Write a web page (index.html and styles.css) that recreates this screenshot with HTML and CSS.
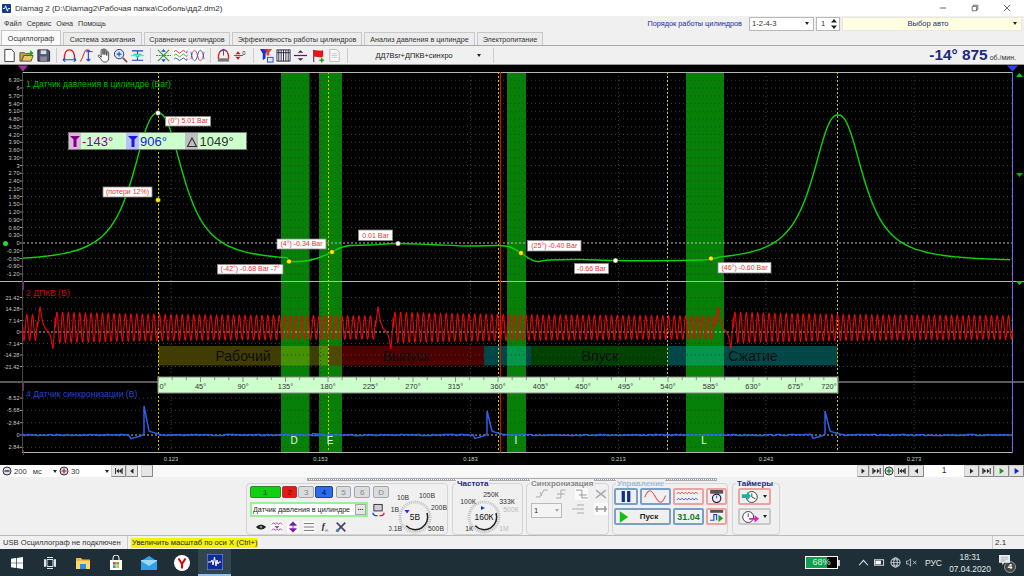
FILE: index.html
```html
<!DOCTYPE html>
<html lang="ru">
<head>
<meta charset="utf-8">
<title>Diamag 2</title>
<link rel="stylesheet" href="styles.css">
</head>
<body>
<svg class="defs" xmlns="http://www.w3.org/2000/svg">
  <symbol id="n-first" viewBox="0 0 11 8"><path d="M1 0h1.2v8H1zM9.8 0h1.2v8H9.8zM2.5 4 6 1v6zM6 4l3.5-3v6z" fill="#222"/></symbol>
  <symbol id="n-prev" viewBox="0 0 11 8"><path d="M3 4 7.5 .5v7z" fill="#222"/></symbol>
  <symbol id="n-next" viewBox="0 0 11 8"><path d="M8 4 3.5 .5v7z" fill="#222"/></symbol>
  <symbol id="n-last" viewBox="0 0 11 8"><path d="M0 0h1.2v8H0zM9.8 0h1.2v8H9.8zM5 4 1.5 1v6zM9.5 4 6 1v6z" fill="#222"/></symbol>
  <symbol id="arch" viewBox="0 0 16 16"><path d="M2.5 11.5C2.5 5 5 2 8 2s5.5 3 5.5 9.5" fill="none" stroke="#e02020" stroke-width="1.5"/></symbol>
</svg>

<header class="titlebar">
  <svg class="app-ico" viewBox="0 0 10 10"><rect width="10" height="10" rx="1" fill="#123a8c"/><path d="M1 5h2l1-3 2 6 1-3h2" fill="none" stroke="#fff" stroke-width="1"/></svg>
  <span class="app-title">Diamag 2 (D:\Diamag2\Рабочая папка\Соболь\дд2.dm2)</span>
  <div class="winctl">
    <svg viewBox="0 0 10 10"><path d="M1 5h8" stroke="#444" stroke-width="1"/></svg>
    <svg viewBox="0 0 10 10"><path d="M1.5 3h5.5v5.5H1.5zM3 3V1.5h5.5V7H7" fill="none" stroke="#444" stroke-width=".9"/></svg>
    <svg viewBox="0 0 10 10"><path d="M1 1l8 8M9 1l-8 8" stroke="#444" stroke-width="1"/></svg>
  </div>
</header>

<nav class="menubar">
  <span class="menu">Файл</span><span class="menu">Сервис</span><span class="menu">Окна</span><span class="menu">Помощь</span>
  <span class="order-label">Порядок работы цилиндров</span>
  <div class="combo combo-order"><span>1-2-4-3</span><i class="caret"></i></div>
  <div class="combo combo-spin"><span>1</span><svg viewBox="0 0 6 10"><path d="M3 0l3 3.5H0zM3 10l3-3.5H0z" fill="#222"/></svg></div>
  <div class="combo combo-auto"><span class="grow">Выбор авто</span><i class="caret"></i></div>
</nav>

<div class="tabbar">
  <span class="tab tab-on">Осциллограф</span>
  <span class="tab t2">Система зажигания</span>
  <span class="tab t3">Сравнение цилиндров</span>
  <span class="tab t4">Эффективность работы цилиндров</span>
  <span class="tab t5">Анализ давления в цилиндре</span>
  <span class="tab t6">Электропитание</span>
</div>

<div class="toolbar">
  <div class="tools">
    <svg viewBox="0 0 16 16"><path d="M3 1.5h7l3 3v10H3z" fill="#fff" stroke="#333"/></svg>
    <svg viewBox="0 0 16 16"><path d="M1 14V5h5l1 1h5v2H5l-2 6z" fill="#c8a040" stroke="#554"/><path d="M3 14l2-6h10l-2 6z" fill="#e8c860" stroke="#554"/><path d="M9 5h3V2l3.500 3.500L12 9V6.500H9z" fill="#20a020"/></svg>
    <svg viewBox="0 0 16 16"><path d="M2 2h11l1.500 1.500V14H2z" fill="#505870" stroke="#223"/><rect x="5" y="2.500" width="6" height="4" fill="#dde"/><rect x="4.500" y="9" width="7" height="5" fill="#889"/></svg>
    <i class="sep"></i>
    <svg viewBox="0 0 16 16"><use href="#arch"/><path d="M1 12.500h14M1 12.500l2.500-2M1 12.500l2.500 2M15 12.500l-2.500-2M15 12.500l-2.500 2" fill="none" stroke="#2050d0" stroke-width="1.200"/></svg>
    <svg viewBox="0 0 16 16"><path d="M1 14C4 14 5 2 8 2s2 2 7 2" fill="none" stroke="#e04040" stroke-width="1.200"/><path d="M10 2v12M10 2 8 4.500M10 2l2 2.500M10 14l-2-2.500M10 14l2-2.500" fill="none" stroke="#2050d0" stroke-width="1.200"/></svg>
    <svg viewBox="0 0 16 16"><path d="M5.500 8V2.500a1 1 0 0 1 2 0V7V1.800a1 1 0 0 1 2 0V7V2.800a1 1 0 0 1 2 0V8V5a1 1 0 0 1 2 0v6c0 3-2 4-4 4s-3-1-4-3L2.500 9c-.7-1.300 .8-2 1.500-1.200L5.500 10z" fill="#fff" stroke="#333" stroke-width=".9"/></svg>
    <svg viewBox="0 0 16 16"><circle cx="6.500" cy="6.500" r="5" fill="#d8e8ff" stroke="#335"/><path d="M4 6.500h5M6.500 4v5" stroke="#2050d0" stroke-width="1.200"/><path d="M10.500 10.500l4.500 4.500" stroke="#854" stroke-width="2"/></svg>
    <svg viewBox="0 0 16 16"><path d="M2 3h12M2 13h12M8 3v10" stroke="#2040c0" stroke-width="1.200"/><path d="M3 6h10L8 11z" fill="#20d0b0"/><path d="M1 8h14" stroke="#60e0d0" stroke-width="1.500"/></svg>
    <i class="sep"></i>
    <svg viewBox="0 0 16 16"><path d="M2 2l12 12M14 2 2 14" stroke="#30a030" stroke-width="1.200"/><path d="M8 1l2.500 3h-5zM8 15l2.500-3h-5z" fill="#2050d0"/><path d="M0 8h16" stroke="#c03030" stroke-dasharray="2 1"/></svg>
    <svg class="tool-on" viewBox="0 0 16 16"><path d="M1 4q2-3 4 0t4 0 4 0 2-1" fill="none" stroke="#e03030"/><path d="M1 8q2-3 4 0t4 0 4 0 2-1" fill="none" stroke="#30a030"/><path d="M1 12q2-3 4 0t4 0 4 0 2-1" fill="none" stroke="#2050d0"/></svg>
    <svg class="tool-on" viewBox="0 0 16 16"><path d="M1 12C3 0 6 0 8 8s5 8 7-4" fill="none" stroke="#e03030"/><path d="M1 4C3 16 6 16 8 8s5-8 7 4" fill="none" stroke="#2050d0"/></svg>
    <i class="sep"></i>
    <svg viewBox="0 0 16 16"><use href="#arch"/><path d="M8 1v7M8 1 6 3.500M8 1l2 2.500" fill="none" stroke="#2050d0"/><rect x="2" y="11" width="12" height="3.500" fill="#777"/></svg>
    <svg viewBox="0 0 18 16"><path d="M1 8h11" stroke="#444"/><path d="M3 6.500h6L6 3zM3 9.500h6L6 13z" fill="#c02020"/><text class="zero" x="11" y="7">0</text></svg>
    <i class="sep"></i>
    <svg viewBox="0 0 16 16"><path d="M1 1h9L7 6v5l-3 2V6z" fill="#2030d0"/><path d="M5 1h9l-3 4v3H8V5z" fill="#d03030" opacity=".85"/><rect x="9" y="10" width="6" height="5" fill="#e0e8ff" stroke="#2050d0"/></svg>
    <svg class="tool-on" viewBox="0 0 16 16"><rect x="1" y="2" width="14" height="12" fill="#fff" stroke="#224"/><path d="M1 5h14M5.500 2v12M10.500 2v12M3 2v12M8 2v12M13 2v12" stroke="#224" fill="none"/></svg>
    <svg viewBox="0 0 16 16"><path d="M1 8h14" stroke="#800080" stroke-width="1.300"/><path d="M5 5h6L8 2.500zM5 11h6l-3 2.500z" fill="#333"/></svg>
    <svg viewBox="0 0 16 16"><path d="M4 15V2" stroke="#222"/><path d="M4 2l8 1 2-1v7l-2 1-8-1z" fill="#e01818"/><path d="M10 13h5M12.500 10.500v5" stroke="#20a020" stroke-width="1.500"/></svg>
    <svg viewBox="0 0 16 16"><path d="M3 1.500h7l3 3v10H3z" fill="#f8f8f8" stroke="#bbb"/><path d="M5 6h6M5 8h6M5 10h6" stroke="#ccc"/></svg>
    <i class="sep"></i>
    <div class="preset"><span class="preset-name">ДД7Вsr+ДПКВ+синхро</span><i class="caret"></i></div>
    <i class="sep"></i>
  </div>
  <div class="rpm"><b>-14° 875</b><small>об./мин.</small></div>
</div>

<main class="scope"><svg id="scope" viewBox="0 65 1024 400" xmlns="http://www.w3.org/2000/svg"></svg></main>

<div class="navrow">
  <svg class="zoombtn" viewBox="0 0 10 10"><circle cx="5" cy="5" r="4" fill="#dde" stroke="#333"/><path d="M2.500 5h5" stroke="#222" stroke-width="1.200"/></svg>
  <div class="field f-ms"><span>200</span><span class="unit">мс</span><i class="caret"></i></div>
  <svg class="zoombtn" viewBox="0 0 10 10"><circle cx="5" cy="5" r="4" fill="#dde" stroke="#333"/><path d="M2.500 5h5M5 2.500v5" stroke="#c02020" stroke-width="1.200"/></svg>
  <div class="field f-n"><span>30</span><i class="caret"></i></div>
  <button class="nb"><svg><use href="#n-first"/></svg></button>
  <button class="nb nb-s"><svg><use href="#n-prev"/></svg></button>
  <button class="nb nb-gap"></button>
  <div class="track"></div>
  <button class="nb nb-s"><svg><use href="#n-next"/></svg></button>
  <button class="nb"><svg><use href="#n-last"/></svg></button>
  <svg class="zoombtn" viewBox="0 0 10 10"><circle cx="5" cy="5" r="4" fill="#dde" stroke="#333"/><path d="M2.500 5h5M5 2.500v5" stroke="#10a010" stroke-width="1.400"/></svg>
  <button class="nb"><svg><use href="#n-first"/></svg></button>
  <button class="nb"><svg><use href="#n-prev"/></svg></button>
  <div class="page">1</div>
  <button class="nb"><svg><use href="#n-next"/></svg></button>
  <button class="nb"><svg><use href="#n-last"/></svg></button>
  <button class="nb"><svg viewBox="0 0 11 8"><path d="M3 0l6 4-6 4z" fill="#10a010"/></svg></button>
  <button class="nb"><svg viewBox="0 0 11 8"><path d="M3 0l6 4-6 4z" fill="#1020e0"/></svg></button>
</div>

<section class="panel">
  <div class="hscroll"></div>
  <div class="groups">
    <div class="grp g-chan">
      <div class="chan-col">
        <div class="chans">
          <span class="ch ch1">1</span><span class="ch ch2">2</span><span class="ch ch3">3</span><span class="ch ch4">4</span><span class="ch ch5">5</span><span class="ch ch6">6</span><span class="ch ch7">D</span>
        </div>
        <div class="chan-name">
          <div class="sensor"><span class="grow">Датчик давления в цилиндре</span><span class="dots">...</span></div>
          <svg class="swap" viewBox="0 0 14 14"><rect x="2" y="1" width="9" height="7" fill="#ccd" stroke="#333"/><path d="M1 10a4 3 0 0 0 5 3" fill="none" stroke-width="1.500" stroke="#2040e0"/><path d="M13 10a4 3 0 0 1-5 3" fill="none" stroke-width="1.500" stroke="#e02020"/></svg>
        </div>
        <div class="chan-tools">
          <svg viewBox="0 0 14 10"><path d="M1 5q6-6 12 0-6 6-12 0z" fill="#222"/><circle cx="7" cy="5" r="1.500" fill="#888"/></svg>
          <svg class="lit" viewBox="0 0 14 12"><path d="M1 3l2-2 2 2 2-2 2 2 2-2 2 2M1 10l2-2 2 2 2-2 2 2 2-2 2 2" fill="none" stroke="#a020a0"/><path d="M4 5h6L7 7.500z" fill="#444"/></svg>
          <svg class="lit" viewBox="0 0 14 14"><path d="M7 1v12M7 1 3 5h8zM7 13l-4-4h8z" fill="#2030d0" stroke="#a020a0"/></svg>
          <svg class="lit" viewBox="0 0 14 12"><path d="M1 2h12M1 6h12M1 10h12" stroke="#666"/></svg>
          <span class="fx">f<sub>∞</sub></span>
          <svg viewBox="0 0 14 14"><path d="M2 2l10 10M12 2 2 12" stroke="#446" stroke-width="2"/><circle cx="3" cy="11" r="2" fill="#48b"/></svg>
        </div>
      </div>
      <svg class="knob" viewBox="0 0 58 50">
        <circle cx="26" cy="33" r="15" fill="none" stroke="#c0c0c0" stroke-width="3" stroke-dasharray="1 1"/>
        <path d="M17.200 41.800A12.500 12.500 0 0 0 38 29" fill="none" stroke="#222" stroke-width="1.500"/>
        <path d="M15.500 26h5L18 29.500z" fill="#2030e0"/>
        <text x="26" y="36" class="k-mid">5В</text>
        <text x="14" y="16">10В</text><text x="38" y="14">100В</text><text x="6" y="28">1В</text><text x="50" y="26">200В</text><text x="6" y="47">0.1В</text><text x="47" y="47">500В</text>
      </svg>
    </div>

    <div class="grp g-freq">
      <div class="gt gt-navy">Частота</div>
      <svg class="knob" viewBox="0 0 70 50">
        <circle cx="31" cy="33" r="15" fill="none" stroke="#c0c0c0" stroke-width="3" stroke-dasharray="1 1"/>
        <path d="M22.200 41.800A12.500 12.500 0 0 0 43 29" fill="none" stroke="#222" stroke-width="1.500"/>
        <path d="M28 22l4 2-4 2z" fill="#2030e0"/>
        <text x="31" y="36" class="k-mid">160К</text>
        <text x="38" y="13">250К</text><text x="15" y="20">100К</text><text x="54" y="20">333К</text><text x="58" y="28" class="off">500К</text><text x="16" y="47">1К</text><text x="51" y="47" class="off">1М</text>
      </svg>
    </div>

    <div class="grp g-sync">
      <div class="gt gt-grey">Синхронизация</div>
      <div class="sync-row">
        <svg viewBox="0 0 14 12"><path d="M1 9h4l4-7h4M5 4l2 4" fill="none" stroke="#aaa"/></svg>
        <svg viewBox="0 0 14 12"><path d="M1 10h5V2h5M2 6h8" fill="none" stroke="#aaa"/></svg>
        <svg class="lit" viewBox="0 0 14 12"><path d="M1 2h6v8h6M4 7h8" fill="none" stroke="#999"/></svg>
        <svg viewBox="0 0 14 12"><path d="M2 2l10 8M12 2 2 10" stroke="#aaa" stroke-width="1.500"/></svg>
      </div>
      <div class="sync-row sync-row2">
        <div class="field f-sync"><span>1</span><i class="caret caret-off"></i></div>
        <svg viewBox="0 0 14 12"><path d="M1 6h12M6 2h7M6 10h7" stroke="#aaa"/></svg>
        <svg class="lit" viewBox="0 0 14 12"><path d="M1 6h12M3 3v6M11 3v6" stroke="#999" stroke-width="1.500"/></svg>
      </div>
    </div>

    <div class="grp g-ctrl">
      <div class="gt gt-sky">Управление</div>
      <div class="ctrl-grid">
        <button class="cb cb-blue"><svg viewBox="0 0 12 12"><path d="M2 1h3v10H2zM7 1h3v10H7z" fill="#103090"/></svg></button>
        <button class="cb cb-blue"><svg viewBox="0 0 28 14"><path d="M2 8C6-2 9-2 14 7s8 9 12-1" fill="none" stroke="#e05050" stroke-width="1.200"/></svg></button>
        <button class="cb cb-red"><svg viewBox="0 0 28 14"><path d="M1 4l2-2 2 2 2-2 2 2 2-2 2 2 2-2 2 2 2-2 2 2 2-2 2 2" fill="none" stroke="#e03030"/><path d="M1 11l2-2 2 2 2-2 2 2 2-2 2 2 2-2 2 2 2-2 2 2 2-2 2 2" fill="none" stroke="#2040e0"/></svg></button>
        <button class="cb cb-red"><svg viewBox="0 0 16 14"><rect x="1" y="0" width="14" height="4" fill="#555"/><circle cx="8" cy="9" r="4.500" fill="none" stroke="#224" stroke-width="1.300"/><path d="M8 9V6" stroke="#2040e0"/></svg></button>
        <button class="cb cb-blue cb-start"><svg viewBox="0 0 12 16"><path d="M1 1l10 7-10 7z" fill="#10c010"/></svg><b class="grow">Пуск</b></button>
        <button class="cb cb-blue cb-val">31.04</button>
        <button class="cb cb-red"><svg viewBox="0 0 16 14"><rect x="1" y="0" width="14" height="3" fill="#555"/><path d="M1 11h4V5h3v6" fill="none" stroke="#2040e0" stroke-width="1.200"/><path d="M10 5l5 4-5 4z" fill="#10a010"/></svg></button>
      </div>
    </div>

    <div class="grp g-timer">
      <div class="gt gt-navy">Таймеры</div>
      <button class="tm"><svg viewBox="0 0 22 14"><circle cx="13" cy="7" r="6" fill="#fff" stroke="#333"/><path d="M13 7V3M13 7l4 2" stroke="#333"/><path d="M2 4h6V1l4 5-4 5V8H2z" fill="#20b0a0"/></svg><i class="caret"></i></button>
      <button class="tm"><svg viewBox="0 0 22 14"><circle cx="9" cy="7" r="6" fill="#fff" stroke="#333"/><path d="M9 7V3" stroke="#333"/><path d="M10 8h6V5l5 4-5 4v-3h-6z" fill="#e020c0"/></svg><i class="caret"></i></button>
    </div>
  </div>
</section>

<footer class="status">
  <span class="st-usb">USB Осциллограф не подключен</span>
  <span class="st-hint">Увеличить масштаб по оси X (Ctrl+)</span>
  <span class="st-ver">2.1</span>
</footer>

<div class="taskbar">
  <span class="tb"><svg viewBox="0 0 12 12"><path d="M0 1.700 5 1v4.700H0zM5.700.9 12 0v5.700H5.700zM0 6.300h5V11L0 10.300zM5.700 6.300H12V12l-6.300-.9z" fill="#fff"/></svg></span>
  <span class="tb"><svg viewBox="0 0 12 12"><path d="M3 2.500h6v7H3zM.5 2.500h1v7h-1zM10.500 2.500h1v7h-1zM3 .5h6M3 11.500h6" fill="none" stroke="#dfe6ea"/></svg></span>
  <span class="tb tb-big"><svg viewBox="0 0 16 14"><path d="M1 2h5l1.500 1.500H15V13H1z" fill="#f0b840"/><path d="M1 5h14v8H1z" fill="#ffd86a"/><rect x="5" y="8" width="6" height="5" fill="#2f8fd8"/></svg></span>
  <span class="tb tb-big"><svg viewBox="0 0 16 16"><path d="M2 5h12v10H2z" fill="#fff"/><path d="M5 5V3a3 3 0 0 1 6 0v2" fill="none" stroke="#fff"/><rect x="5" y="7" width="2.700" height="2.700" fill="#e04a20"/><rect x="8.300" y="7" width="2.700" height="2.700" fill="#6ab020"/><rect x="5" y="10.300" width="2.700" height="2.700" fill="#20a0e0"/><rect x="8.300" y="10.300" width="2.700" height="2.700" fill="#f0b820"/></svg></span>
  <span class="tb tb-big"><svg viewBox="0 0 16 14"><path d="M0 5 8 0l8 5v9H0z" fill="#30a0e8"/><path d="M0 5l8 5 8-5v-1H0z" fill="#9cd8fa"/></svg></span>
  <span class="tb tb-big"><svg viewBox="0 0 16 16"><circle cx="8" cy="8" r="8" fill="#fff"/><path d="M4.500 3.500 8 9l3.500-5.500M8 9v4.500" fill="none" stroke="#e00000" stroke-width="2"/></svg></span>
  <span class="tb tb-big tb-on"><svg viewBox="0 0 16 16"><rect width="16" height="16" fill="#102a9c" stroke="#8fa4e8" stroke-width="1"/><path d="M1 8h3l1-2 1 5 1.500-8 1.500 9 1-6 1 4 1-2h2" fill="none" stroke="#fff"/></svg></span>
  <div class="tray">
    <div class="batt"><span class="batt-txt">68%</span></div>
    <i class="batt-nub"></i>
    <svg class="tr t-up" viewBox="0 0 10 6"><path d="M1 5.500 5 1l4 4.500" fill="none" stroke="#dfe6ea"/></svg>
    <svg class="tr" viewBox="0 0 12 8"><rect x=".5" y="1" width="10" height="6" fill="none" stroke="#dfe6ea"/><rect x="1.500" y="2" width="6" height="4" fill="#fff"/></svg>
    <svg class="tr" viewBox="0 0 12 12"><circle cx="6" cy="6" r="5" fill="none" stroke="#dfe6ea"/><ellipse cx="6" cy="6" rx="2" ry="5" fill="none" stroke="#dfe6ea"/><path d="M1 6h10M2 3h8M2 9h8" stroke="#dfe6ea" stroke-width=".7"/></svg>
    <svg class="tr" viewBox="0 0 12 10"><path d="M.5 3.500h2L5 1v8L2.500 6.500h-2zM7.500 3l4 4M11.500 3l-4 4" fill="none" stroke="#dfe6ea" stroke-width=".8"/></svg>
    <span class="lang">РУС</span>
    <div class="clock"><span>18:31</span><span>07.04.2020</span></div>
    <div class="notif"><svg viewBox="0 0 12 12"><path d="M0 0h12v8.500H6L3.500 11V8.500H0z" fill="#e8ecee"/><path d="M2 2.500h8M2 4.500h8M2 6.500h5" stroke="#889" stroke-width=".6"/></svg><span class="badge">4</span></div>
  </div>
</div>
<script src="chart.js"></script>
</body>
</html>
```

FILE: styles.css
```css
* { box-sizing: border-box; }
html, body { margin: 0; padding: 0; }
body {
  width: 1024px; height: 576px; overflow: hidden;
  display: flex; flex-direction: column;
  background: #f0f0f0; color: #222;
  font: 8px "Liberation Sans", Arial, sans-serif;
}
.defs { display: none; }
.grow { flex: 1; text-align: center; }
button { padding: 0; margin: 0; font: inherit; }

.titlebar { height: 16px; background: #fff; display: flex; align-items: center; padding-left: 2px; }
.app-ico { width: 9px; height: 9px; margin-right: 4px; }
.app-title { font-size: 8.1px; color: #333; }
.winctl { margin-left: auto; display: flex; gap: 24px; padding-right: 13px; }
.winctl svg { width: 8px; height: 8px; }

.menubar { height: 15px; display: flex; align-items: center; padding-left: 4px; }
.menu { margin-right: 5px; font-size: 7.2px; color: #333; }
.order-label { margin-left: auto; margin-right: 7px; color: #1c2c9c; font-size: 7.3px; }
.combo { height: 14px; background: #fff; border: 1px solid #b8b8b8; display: flex; align-items: center; padding: 0 2px; font-size: 7.6px; color: #333; }
.combo-order { width: 65px; justify-content: space-between; margin-right: 2px; }
.combo-spin { width: 24px; margin-right: 2px; justify-content: space-between; padding: 0 2px 0 4px; }
.combo-spin svg { width: 6px; height: 10px; }
.combo-auto { width: 180px; background: #ffffe2; border-color: #e8e8e0; margin-right: 2px; color: #1c2c7c; }
.caret { display: block; width: 0; height: 0; border: 2.5px solid transparent; border-top: 3px solid #222; border-bottom: 0; margin: 0 2px; }
.caret-off { border-top-color: #aaa; }

.tabbar { height: 15px; display: flex; align-items: flex-end; padding-left: 1px; border-bottom: 1px solid #aaa; }
.tab { height: 13px; border: 1px solid #c8c8c8; border-bottom: 0; background: #ececec; color: #333; display: flex; align-items: center; justify-content: center; margin-right: 2px; font-size: 7.2px; }
.tab-on { width: 60px; height: 15px; background: #fafafa; }
.t2 { width: 79px; } .t3 { width: 86px; } .t4 { width: 130px; } .t5 { width: 111px; } .t6 { width: 66px; }

.toolbar { height: 19px; display: flex; align-items: center; border-bottom: 1px solid #999; }
.tools { display: flex; align-items: center; gap: 2px; padding-left: 2px; }
.tools > svg { width: 15px; height: 15px; flex: none; }
.tools .tool-on { background: #fff; }
.zero { font-size: 7px; fill: #222; }
.sep { display: block; width: 1px; height: 15px; background: #ccc; margin: 0 3px; }
.preset { width: 135px; display: flex; align-items: center; padding-right: 5px; }
.preset-name { flex: 1; text-align: center; font-size: 7.4px; color: #222; }
.rpm { margin-left: auto; padding-right: 8px; color: #1a2a80; display: flex; align-items: baseline; }
.rpm b { font-size: 15.4px; }
.rpm small { font-size: 7px; color: #333; margin-left: 2px; }

.scope { height: 400px; background: #000; }
#scope { display: block; width: 1024px; height: 400px; font-family: "Liberation Sans", Arial, sans-serif; }

.navrow { height: 12px; display: flex; align-items: center; padding-left: 2px; background: #f8f8f8; }
.zoombtn { width: 10px; height: 10px; flex: none; }
.field { height: 12px; background: #fff; display: flex; align-items: center; padding-left: 2px; font-size: 7.6px; color: #333; }
.field .caret { margin-left: auto; }
.f-ms { width: 47px; }
.unit { margin-left: 6px; }
.f-n { width: 42px; }
.nb { width: 15px; height: 12px; flex: none; border: 1px solid #ccc; border-right-color: #888; border-bottom-color: #888; background: #e6e6e6; display: flex; align-items: center; justify-content: center; }
.nb svg { width: 11px; height: 6px; }
.nb-s { width: 12px; }
.nb-gap { margin-left: 3px; width: 12px; }
.track { flex: 1; background: #f8f8f8; }
.page { width: 40px; text-align: center; font-size: 8.5px; color: #333; background: #fff; height: 12px; }

.panel { height: 59px; border-bottom: 1px solid #bbb; display: flex; flex-direction: column; }
.hscroll { width: 410px; height: 4px; margin: 1px 0 0 307px; border: 1px solid #aaa; background: repeating-linear-gradient(90deg, #7aa8e0 0 1px, #fff 1px 2px); }
.groups { display: flex; align-items: flex-start; margin-top: 2px; padding-left: 246px; }
.grp { height: 52px; border: 1px solid #d4d4d4; border-radius: 4px; }
.gt { height: 9px; margin: -5px 0 -4px 3px; padding: 0 1px; font-weight: bold; font-size: 8px; background: #f0f0f0; width: max-content; }
.gt-navy { color: #1a2a80; }
.gt-grey { color: #888; }
.gt-sky { color: #a0bcd8; }

.g-chan { width: 202px; display: flex; margin-right: 4px; }
.chan-col { width: 142px; padding: 2px 0 0 3px; }
.chans { display: flex; gap: 1px; height: 12px; }
.ch { width: 16px; border-radius: 2px; border: 1px solid #9ab; display: flex; align-items: center; justify-content: center; font-size: 8px; color: #888; background: #dcdcdc; }
.ch1 { width: 31px; background: #10d010; color: #063; border-color: #2a8a2a; font-weight: bold; }
.ch2 { background: #e81818; color: #500; border-color: #a33; }
.ch4 { background: #2a6cf0; color: #012; border-color: #247; width: 18px; }
.ch5, .ch6 { margin-left: 2px; }
.ch7 { margin-left: 2px; }
.chan-name { display: flex; align-items: center; margin-top: 4px; height: 15px; }
.sensor { width: 118px; height: 15px; border: 2px solid #98f098; background: #fff; display: flex; align-items: center; font-size: 7.2px; color: #222; }
.sensor .grow { white-space: nowrap; text-align: left; padding-left: 1px; }
.dots { width: 11px; height: 11px; background: #e6e6e6; border: 1px solid #aaa; text-align: center; line-height: 6px; font-weight: bold; }
.swap { width: 13px; height: 14px; margin-left: 4px; }
.chan-tools { display: flex; align-items: center; gap: 4px; margin: 3px 0 0 5px; height: 13px; }
.chan-tools > svg { width: 12px; height: 12px; }
.chan-tools .lit { background: #fafafa; }
.fx { width: 12px; font: italic bold 9px "Liberation Serif", serif; text-align: center; }
.fx sub { font-size: 5px; }
.knob { display: block; flex: none; width: 58px; height: 50px; font-size: 6.8px; fill: #333; text-anchor: middle; }
.g-freq .knob { width: 70px; }
.knob .k-mid { font-size: 8.5px; fill: #111; }
.knob .off { fill: #bbb; }
.g-freq { width: 71px; margin-right: 3px; }

.g-sync { width: 83px; margin-right: 3px; }
.sync-row { display: flex; gap: 6px; padding-left: 8px; margin-top: 4px; }
.sync-row svg { width: 14px; height: 12px; }
.sync-row .lit { background: #fafafa; }
.sync-row2 { padding-left: 4px; margin-top: 3px; gap: 9px; }
.f-sync { width: 31px; height: 15px; border: 1px solid #bbb; background: #f4f4f4; flex: none; }

.g-ctrl { width: 116px; margin-right: 4px; }
.ctrl-grid { display: grid; grid-template-columns: 24px 31px 31px 21px; grid-template-rows: 17px 17px; gap: 3px 2px; padding: 3px 0 0 1px; margin-top: 1px; }
.cb { border: 2px solid #7aa0c8; border-radius: 2px; background: #f0f0f0; display: flex; align-items: center; justify-content: center; }
.cb svg { width: 90%; height: 13px; }
.cb-red { border-color: #f0a0a0; }
.cb-start { grid-column: 1 / span 2; padding-left: 3px; }
.cb-start svg { width: 10px; height: 14px; flex: none; }
.cb-start b { color: #222; font-size: 8px; }
.cb-val { color: #108010; font-weight: bold; font-size: 9px; background: #f0f4f8; }

.g-timer { width: 48px; }
.tm { display: flex; align-items: center; justify-content: center; gap: 1px; width: 33px; height: 17px; margin: 3px 0 0 5px; background: #eee; border: 2px solid #c8c8c8; border-radius: 2px; }
.tm:first-of-type { margin-top: 4px; border-color: #f0a0a0; }
.tm svg { width: 21px; height: 14px; }

.status { height: 13px; display: flex; align-items: center; font-size: 7.6px; color: #333; }
.st-usb { width: 128px; padding-left: 3px; border-right: 1px solid #ccc; height: 13px; line-height: 13px; }
.st-hint { background: #f5f500; margin-left: 3px; padding: 0 1px; height: 10px; line-height: 10px; color: #222; }
.st-ver { margin-left: auto; width: 32px; border-left: 1px solid #ccc; height: 13px; line-height: 13px; padding-left: 2px; font-size: 8px; }

.taskbar { height: 27px; background: #1e2f38; display: flex; align-items: center; color: #e4eaee; }
.tb { width: 33px; height: 27px; display: flex; align-items: center; justify-content: center; flex: none; }
.tb svg { width: 12px; height: 12px; }
.tb-big svg { width: 16px; height: 16px; }
.tb-on { background: #32444c; border-bottom: 2px solid #8cc4ec; }
.tray { margin-left: auto; display: flex; align-items: center; }
.batt { width: 33px; height: 13px; border: 1px solid #fff; background: linear-gradient(90deg, #10a050 68%, #000 68%); text-align: center; }
.batt-txt { font-size: 9px; line-height: 11px; color: #d8f0d8; display: block; }
.batt-nub { display: block; width: 2px; height: 6px; background: #ccc; margin-right: 18px; }
.tr { width: 11px; height: 11px; margin-right: 5px; flex: none; }
.lang { margin-left: 3px; font-size: 8.5px; }
.clock { display: flex; flex-direction: column; align-items: center; width: 40px; margin-left: 8px; font-size: 8.3px; line-height: 12px; }
.notif { width: 17px; height: 22px; margin: 0 8px 0 9px; padding-top: 3px; }
.notif svg { display: block; width: 11px; height: 11px; }
.badge { display: block; width: 12px; height: 12px; margin: -5px 0 0 5px; border-radius: 50%; background: #444; border: 1px solid #999; font-size: 8px; line-height: 10px; text-align: center; color: #fff; font-weight: bold; }
```

FILE: chart.js
```js
(function () {
  var svg = document.getElementById('scope');
  var NS = 'http://www.w3.org/2000/svg';
  function el(tag, attrs, text) {
    var e = document.createElementNS(NS, tag);
    for (var k in attrs) e.setAttribute(k, attrs[k]);
    if (text !== undefined) e.textContent = text;
    svg.appendChild(e);
    return e;
  }
  function line(x1, y1, x2, y2, color, w, dash) {
    var a = { x1: x1, y1: y1, x2: x2, y2: y2, stroke: color, 'stroke-width': w || 1 };
    if (dash) a['stroke-dasharray'] = dash;
    el('line', a);
  }
  var TOP = 72, BOT = 452.5, L = 23, R = 1012.5;

  // Green marker bands
  [[281, 309.5], [319, 342], [507, 526], [686, 724]].forEach(function (b) {
    el('rect', { x: b[0], y: TOP, width: b[1] - b[0], height: BOT - TOP, fill: '#068006' });
  });

  // Engine stroke bars
  [[158, 328, 'rgba(190,180,0,.34)'], [328, 484, 'rgba(180,0,0,.42)'], [484, 531, 'rgba(0,190,190,.38)'],
   [531, 668, 'rgba(0,170,0,.38)'], [668, 838, 'rgba(0,190,190,.38)']].forEach(function (p) {
    el('rect', { x: p[0], y: 346, width: p[1] - p[0], height: 19.5, fill: p[2] });
  });
  [['Рабочий', 243], ['Выпуск', 406], ['Впуск', 600], ['Сжатие', 753]].forEach(function (t) {
    el('text', { x: t[1], y: 361, 'font-size': 14, fill: '#0c0c0c', 'text-anchor': 'middle' }, t[0]);
  });

  // Axis scales and horizontal grid
  function scale(vals, y0, step, zeroIdx) {
    vals.forEach(function (v, i) {
      var y = y0 + (i - zeroIdx) * step;
      if (v === '0') line(L, y, R, y, '#b8b8b8', 1, '2 2');
      else line(L, y, R, y, '#3e3e3e', 1, '1 3');
      line(20, y, 23, y, '#999', 1);
      el('text', { x: 19.5, y: y + 2, 'font-size': 5.6, fill: '#c8c8c8', 'text-anchor': 'end' }, v);
    });
  }
  scale(['6.30', '6', '5.70', '5.40', '5.10', '4.80', '4.50', '4.20', '3.90', '3.60', '3.30', '3', '2.70', '2.40', '2.10', '1.80', '1.50', '1.20', '0.90', '0.60', '0.30', '0', '-0.30', '-0.60', '-0.90', '-1.20'], 243, 7.75, 21);
  scale(['21.42', '14.28', '7.14', '0', '-7.14', '-14.28', '-21.42'], 332, 11.5, 3);
  scale(['-8.52', '-5.68', '-2.84', '0', '2.84'], 435, 12.3, 3);

  // Vertical grid, time axis
  [[171, '0.123'], [320.5, '0.153'], [470.5, '0.183'], [618.5, '0.213'], [766, '0.243'], [914, '0.273']].forEach(function (t) {
    line(t[0], TOP, t[0], BOT, '#3e3e3e', 1, '1 3');
    el('text', { x: t[0], y: 460.5, 'font-size': 5.8, fill: '#b8dcc0', 'text-anchor': 'middle' }, t[1]);
  });

  // Panel frames
  line(22, 72.5, R, 72.5, '#b4b4b4');
  line(0, 281.5, 1024, 281.5, '#b4b4b4');
  line(0, 382, 1024, 382, '#b4b4b4');
  line(22, 452.5, R, 452.5, '#b4b4b4');
  line(22.5, 72, 22.5, 452, '#484848');
  line(23.5, 281, 23.5, 290, '#802080');
  line(23.5, 382, 23.5, 391, '#802080');
  line(23.5, 450, 23.5, 455, '#802080');
  line(R, TOP, R, BOT, '#6c6cf0');

  // Crank angle dashes
  [158.5, 328.5, 498.5, 667.5, 837.5].forEach(function (x) { line(x, TOP, x, BOT, '#d8c800', 1, '2 2'); });
  line(500.5, TOP, 500.5, BOT, '#d01010');

  // Pressure trace
  function hump(d) {
    var f = 1 / (1 + Math.pow(Math.abs(d) / 29, 2.4));
    return Math.max(0, (f - 0.012) / 0.988);
  }
  var pts = [];
  for (var x1 = 23; x1 <= 288; x1 += 4) pts.push([x1, 260 - 147 * hump(x1 - 158)]);
  pts = pts.concat([[290, 261.3], [305, 261], [318, 258], [332, 252], [340, 248], [350, 245.5], [370, 245], [398, 243.5], [430, 244.5], [470, 246], [498, 245.5], [510, 247], [521, 253], [530, 259], [537, 261.5], [550, 260], [580, 259.5], [615, 260.5], [660, 260.7], [700, 260], [711, 259]]);
  for (var x2 = 722; x2 <= R; x2 += 4) pts.push([x2, 260 - 145 * hump(x2 - 838)]);
  function smooth(p) {
    var d = 'M' + p[0][0] + ' ' + p[0][1];
    for (var i = 0; i < p.length - 1; i++) {
      var a = p[i - 1] || p[i], b = p[i], c = p[i + 1], e = p[i + 2] || c;
      d += 'C' + (b[0] + (c[0] - a[0]) / 6).toFixed(2) + ' ' + (b[1] + (c[1] - a[1]) / 6).toFixed(2) + ' ' +
        (c[0] - (e[0] - b[0]) / 6).toFixed(2) + ' ' + (c[1] - (e[1] - b[1]) / 6).toFixed(2) + ' ' + c[0] + ' ' + c[1].toFixed(2);
    }
    return d;
  }
  el('path', { d: smooth(pts), fill: 'none', stroke: '#0cd40c', 'stroke-width': 1.4 });

  // Crank sensor trace
  var gaps = [37.5, 375.5, 715.5], GW = 18;
  var shape = [[0, 327], [2.5, 306.5], [5, 322], [8, 329], [11, 332], [13, 336], [15.5, 349], [18, 314]];
  function interp(t) {
    for (var i = 0; i < shape.length - 1; i++) {
      if (t <= shape[i + 1][0]) {
        var a = shape[i], b = shape[i + 1];
        return a[1] + (b[1] - a[1]) * (t - a[0]) / (b[0] - a[0]);
      }
    }
    return shape[shape.length - 1][1];
  }
  var red = 'M23 327', PER = 5.7;
  var lastEnd = -100;
  for (var x = 23; x <= R; x += 0.25) {
    var y = null;
    for (var g = 0; g < gaps.length; g++) {
      if (x >= gaps[g] && x < gaps[g] + GW) { y = interp(x - gaps[g]); }
      if (x >= gaps[g] + GW) lastEnd = gaps[g] + GW;
    }
    if (y === null) {
      var amp = 11.3 + 4 * Math.exp(-(x - lastEnd) / 130);
      y = 327.5 - amp * Math.sin(2 * Math.PI * (x - lastEnd) / PER);
    }
    red += 'L' + x.toFixed(2) + ' ' + y.toFixed(2);
  }
  el('path', { d: red, fill: 'none', stroke: '#ec0808', 'stroke-width': 1.1 });

  // Sync sensor trace
  var seed = 7;
  function rnd() { seed = (seed * 16807) % 2147483647; return seed / 2147483647; }
  var spikes = [[144, 406], [487, 411], [825, 411]];
  var blue = 'M23 435';
  for (var bx = 23; bx <= R; bx += 2) {
    var by = 435 + (rnd() - .5) * 1.4, skip = false;
    for (var s = 0; s < 3; s++) {
      var sx = spikes[s][0];
      if (bx > sx - 14 && bx < sx) { by = 435 + 4 * (sx - bx) / 14; }
      if (bx >= sx - 1 && bx < sx + 1 && !skip) {
        blue += 'L' + sx + ' 434L' + sx + ' ' + spikes[s][1] + 'L' + (sx + 5) + ' 431';
        skip = true;
      }
      if (bx >= sx + 1 && bx < sx + 6) skip = true;
      if (bx >= sx + 6 && bx < sx + 18) by = 435 - 3.5 * (1 - (bx - sx - 6) / 12);
    }
    if (!skip) blue += 'L' + bx + ' ' + by.toFixed(1);
  }
  el('path', { d: blue, fill: 'none', stroke: '#2c60e8', 'stroke-width': 1.5 });
  line(312, 433.5, 322, 434.5, '#2c60e8', 1.5);

  // Channel captions and band letters
  el('text', { x: 26, y: 87, 'font-size': 8.6, fill: '#00bc00' }, '1 Датчик давления в цилиндре (Bar)');
  el('text', { x: 26, y: 296, 'font-size': 8.6, fill: '#c00808' }, '2 ДПКВ (В)');
  el('text', { x: 26, y: 397, 'font-size': 8.6, fill: '#2448c8' }, '4 Датчик синхронизации (В)');
  [['D', 294], ['E', 330], ['I', 516], ['L', 704]].forEach(function (t) {
    el('text', { x: t[1], y: 444, 'font-size': 10, fill: '#e6ffe6', 'text-anchor': 'middle' }, t[0]);
  });

  // Angle ruler
  el('rect', { x: 158, y: 377, width: 680, height: 16, fill: '#ccffcc', stroke: '#888' });
  for (var a = 0; a <= 48; a++) {
    var tx = 158 + a * 14.167;
    line(tx, 377, tx, a % 3 === 0 ? 382 : 380, '#777', .8);
  }
  for (var n = 0; n <= 16; n++) {
    var lx = n === 0 ? 163 : n === 16 ? 829 : 158 + n * 42.5;
    el('text', { x: lx, y: 389, 'font-size': 7.4, fill: '#333', 'text-anchor': 'middle' }, (n * 45) + '°');
  }

  // Measurement labels
  function tag(x, y, w, h, text) {
    el('rect', { x: x, y: y, width: w, height: h, fill: '#fff', stroke: '#8a8a8a', 'stroke-width': .8 });
    el('text', { x: x + w / 2, y: y + h - 2.8, 'font-size': 7, fill: '#f03030', 'text-anchor': 'middle' }, text);
  }
  tag(165.5, 116.5, 45, 9.5, '(0°) 5.01 Bar');
  tag(103, 187, 49, 10, '(потери 12%)');
  tag(277, 239, 49, 10, '(4°) -0.34 Bar');
  tag(217.5, 264.5, 65.5, 9.5, '(-42°) -0.68 Bar -7°');
  tag(358.5, 230, 34, 10.5, '0.01 Bar');
  tag(527.5, 240.5, 53.5, 10.5, '(25°) -0.40 Bar');
  tag(574.5, 263.5, 34, 10, '-0.66 Bar');
  tag(718, 262.5, 53, 10.5, '(46°) -0.60 Bar');

  // Trace points
  [[158, 113, '#fff'], [158, 200, '#f8f000'], [289, 261.5, '#f8f000'], [332, 252, '#f8f000'], [398, 243.5, '#fff'],
   [521, 253, '#f8f000'], [615.5, 260.5, '#fff'], [711, 258.5, '#f8f000']].forEach(function (p) {
    el('circle', { cx: p[0], cy: p[1], r: 2.5, fill: p[2], stroke: '#222', 'stroke-width': .5 });
  });
  el('circle', { cx: 5.5, cy: 243.5, r: 2.5, fill: '#22dd22' });

  // Markers
  el('path', { d: 'M18 65.5h10l-5 6z', fill: '#a030a0' });
  el('path', { d: 'M1007 65.5h11l-5.5 6z', fill: '#3040f0' });
  el('path', { d: 'M1016 77h7l-3.5-4z', fill: '#10d010' });
  el('path', { d: 'M1016 173h7l-3.5 4z', fill: '#10b010' });
  el('path', { d: 'M1016 281h7l-3.5 4z', fill: '#10d010' });

  // Cursor readout
  el('rect', { x: 68.5, y: 132.5, width: 178, height: 17, fill: '#ccffcc', stroke: '#777' });
  el('rect', { x: 69, y: 133, width: 12, height: 16, fill: '#dcb4dc' });
  el('rect', { x: 126, y: 133, width: 13, height: 16, fill: '#b8c0ff' });
  el('rect', { x: 185, y: 133, width: 13, height: 16, fill: '#c0c0c0' });
  el('path', { d: 'M70 136h10l-3.5 3.5V147h-3v-7.5z', fill: '#800080' });
  el('path', { d: 'M128 136h10l-3.5 3.5V147h-3v-7.5z', fill: '#1818e0' });
  el('path', { d: 'M187.5 146.5 192 138l4.5 8.5z', fill: 'none', stroke: '#333', 'stroke-width': 1.1 });
  el('text', { x: 82, y: 145.5, 'font-size': 13, fill: '#900090' }, '-143°');
  el('text', { x: 140, y: 145.5, 'font-size': 13, fill: '#2020e0' }, '906°');
  el('text', { x: 199.5, y: 145.5, 'font-size': 13, fill: '#333' }, '1049°');
})();
```
